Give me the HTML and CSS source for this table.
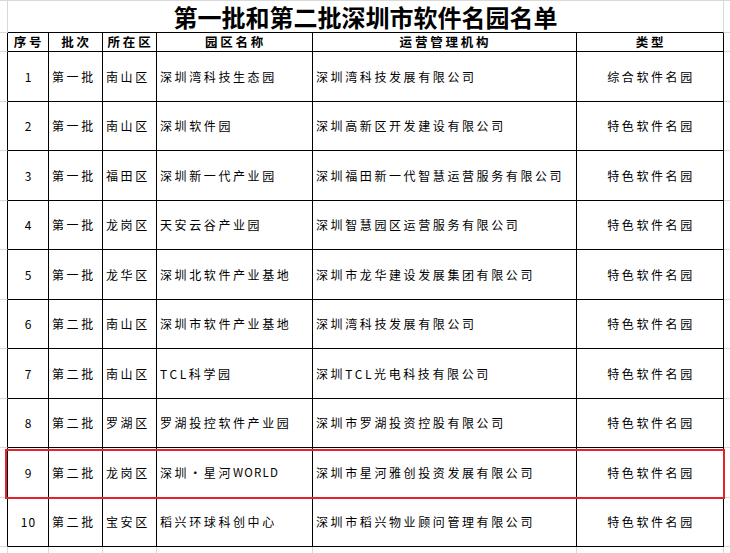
FILE: index.html
```html
<!DOCTYPE html>
<html lang="zh-CN">
<head>
<meta charset="utf-8">
<title>第一批和第二批深圳市软件名园名单</title>
<link rel="stylesheet" href="styles.css">
</head>
<body>
<div class="sheet">
  <div class="gl top"></div>
  <div class="title top">第一批和第二批深圳市软件名园名单</div>
  <div class="gr top"></div>

  <div class="gl"></div>
  <div class="c hd">序号</div>
  <div class="c hd">批次</div>
  <div class="c hd">所在区</div>
  <div class="c hd">园区名称</div>
  <div class="c hd">运营管理机构</div>
  <div class="c hd">类型</div>
  <div class="gr"></div>

  <div class="gl"></div>
  <div class="c num">1</div>
  <div class="c lt">第一批</div>
  <div class="c lt">南山区</div>
  <div class="c lt">深圳湾科技生态园</div>
  <div class="c lt">深圳湾科技发展有限公司</div>
  <div class="c ct">综合软件名园</div>
  <div class="gr"></div>

  <div class="gl"></div>
  <div class="c num">2</div>
  <div class="c lt">第一批</div>
  <div class="c lt">南山区</div>
  <div class="c lt">深圳软件园</div>
  <div class="c lt">深圳高新区开发建设有限公司</div>
  <div class="c ct">特色软件名园</div>
  <div class="gr"></div>

  <div class="gl"></div>
  <div class="c num">3</div>
  <div class="c lt">第一批</div>
  <div class="c lt">福田区</div>
  <div class="c lt">深圳新一代产业园</div>
  <div class="c lt">深圳福田新一代智慧运营服务有限公司</div>
  <div class="c ct">特色软件名园</div>
  <div class="gr"></div>

  <div class="gl"></div>
  <div class="c num">4</div>
  <div class="c lt">第一批</div>
  <div class="c lt">龙岗区</div>
  <div class="c lt">天安云谷产业园</div>
  <div class="c lt">深圳智慧园区运营服务有限公司</div>
  <div class="c ct">特色软件名园</div>
  <div class="gr"></div>

  <div class="gl"></div>
  <div class="c num">5</div>
  <div class="c lt">第一批</div>
  <div class="c lt">龙华区</div>
  <div class="c lt">深圳北软件产业基地</div>
  <div class="c lt">深圳市龙华建设发展集团有限公司</div>
  <div class="c ct">特色软件名园</div>
  <div class="gr"></div>

  <div class="gl"></div>
  <div class="c num">6</div>
  <div class="c lt">第二批</div>
  <div class="c lt">南山区</div>
  <div class="c lt">深圳市软件产业基地</div>
  <div class="c lt">深圳湾科技发展有限公司</div>
  <div class="c ct">特色软件名园</div>
  <div class="gr"></div>

  <div class="gl"></div>
  <div class="c num">7</div>
  <div class="c lt">第二批</div>
  <div class="c lt">南山区</div>
  <div class="c lt">TCL科学园</div>
  <div class="c lt">深圳TCL光电科技有限公司</div>
  <div class="c ct">特色软件名园</div>
  <div class="gr"></div>

  <div class="gl"></div>
  <div class="c num">8</div>
  <div class="c lt">第二批</div>
  <div class="c lt">罗湖区</div>
  <div class="c lt">罗湖投控软件产业园</div>
  <div class="c lt">深圳市罗湖投资控股有限公司</div>
  <div class="c ct">特色软件名园</div>
  <div class="gr"></div>

  <div class="gl"></div>
  <div class="c num">9</div>
  <div class="c lt">第二批</div>
  <div class="c lt">龙岗区</div>
  <div class="c lt">深圳・星河<span class="mono">WORLD</span></div>
  <div class="c lt">深圳市星河雅创投资发展有限公司</div>
  <div class="c ct">特色软件名园</div>
  <div class="gr"></div>

  <div class="gl"></div>
  <div class="c num">10</div>
  <div class="c lt">第二批</div>
  <div class="c lt">宝安区</div>
  <div class="c lt">稻兴环球科创中心</div>
  <div class="c lt">深圳市稻兴物业顾问管理有限公司</div>
  <div class="c ct">特色软件名园</div>
  <div class="gr"></div>

  <div class="gl end"></div>
  <div class="e"></div>
  <div class="e"></div>
  <div class="e"></div>
  <div class="e"></div>
  <div class="e"></div>
  <div class="e"></div>
  <div class="gr end"></div>

  <div class="mark"></div>
</div>
</body>
</html>
```

FILE: styles.css
```css
html, body {
  margin: 0;
  padding: 0;
  background: #ffffff;
}

body {
  font-family: "Noto Sans CJK SC", "Noto Sans", sans-serif;
  color: #000000;
  overflow: hidden;
}

.sheet {
  position: relative;
  width: 730px;
  height: 553px;
  display: grid;
  grid-template-columns: 8px 41px 54px 54px 156px 264px 147px 6px;
  grid-template-rows: 33px 19px 50px 49px 50px 49px 50px 49px 50px 49px 50px 49px 7px;
  overflow: hidden;
}

.sheet > div {
  box-sizing: border-box;
}

.gl {
  border-right: 1px solid #000000;
  border-bottom: 1px solid #d9d9d9;
}

.gr {
  border-bottom: 1px solid #d9d9d9;
}

.top {
  border-top: 1px solid #d9d9d9;
}

.gl.top {
  border-right: 1px solid #d9d9d9;
}

.gr.top {
  border-left: 0;
}

.title {
  grid-column: 2 / 8;
  border-right: 1px solid #d9d9d9;
  border-bottom: 1px solid #000000;
  display: flex;
  align-items: center;
  justify-content: center;
  font-size: 24px;
  font-weight: 700;
  line-height: 1;
  padding-top: 1px;
  letter-spacing: 0;
}

.c {
  border-right: 1px solid #000000;
  border-bottom: 1px solid #000000;
  display: flex;
  align-items: center;
  font-size: 12px;
  line-height: 1;
  letter-spacing: 2.6px;
  white-space: nowrap;
  overflow: hidden;
}

.hd {
  justify-content: center;
  font-weight: 700;
  font-size: 12.5px;
  letter-spacing: 2.8px;
  padding-left: 2px;
}

.num {
  justify-content: center;
  letter-spacing: 1px;
  padding-left: 1px;
}

.lt {
  padding-left: 3px;
}

.ct {
  justify-content: center;
  padding-left: 2px;
}

.mono {
  letter-spacing: 1.2px;
  font-size: 11.5px;
}

.gl.end {
  border-right: 1px solid #d9d9d9;
  border-bottom: 0;
}

.gr.end {
  border-bottom: 0;
}

.e {
  border-right: 1px solid #d9d9d9;
}

.mark {
  position: absolute;
  left: 5px;
  top: 449px;
  width: 720px;
  height: 50px;
  border: 2px solid #e5222b;
  box-sizing: border-box;
  pointer-events: none;
}
```
